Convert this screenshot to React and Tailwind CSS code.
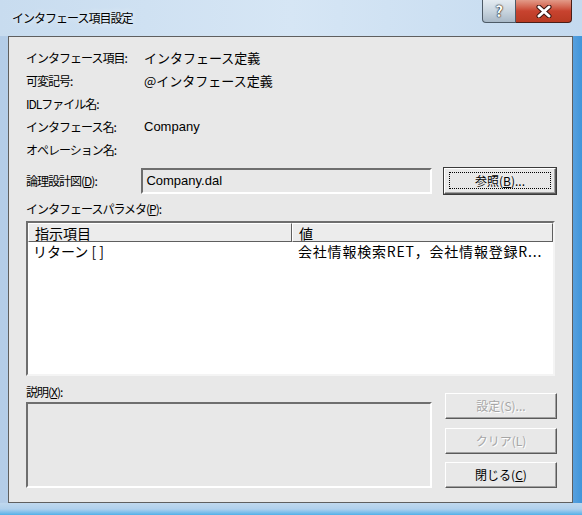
import React from 'react';

const ui = { fontFamily: '"Noto Sans CJK JP", "Liberation Sans", sans-serif' };

// classic raised push button
const Btn = ({ children, disabled, className = '' }) => (
  <div
    className={`h-[26px] w-[112px] flex items-center justify-center bg-[#e8e8e8] border border-t-white border-l-white border-b-[#5a5a5a] border-r-[#5a5a5a] shadow-[inset_-1px_-1px_0_#a0a0a0] text-[12px] ${
      disabled ? 'text-[#a6a6a6] [text-shadow:1px_1px_0_#ffffff]' : 'text-black'
    } ${className}`}
  >
    {children}
  </div>
);

const InfoRow = ({ label, value }) => (
  <div className="h-[23px] flex items-center">
    <div className="w-[118px] text-[12px] tracking-[-1px]">{label}</div>
    <div className="text-[13px]">{value}</div>
  </div>
);

const App = () => {
  return (
    <div
      className="w-[582px] h-[515px] flex flex-col bg-gradient-to-r from-[#b4cde8] via-[#c4dbf0] via-90% to-[#3f95da] overflow-hidden"
      style={ui}
    >
      {/* title bar */}
      <div className="h-[36px] flex items-start shrink-0 bg-gradient-to-r from-[#c8dcef] via-[#d6e6f5] to-[#c4daef]">
        <div className="pl-[12px] pt-[9px] text-[12px] tracking-[-1px] text-black [text-shadow:0_0_6px_#ffffff]">
          インタフェース項目設定
        </div>
        <div className="ml-auto mr-[10px] flex">
          <div className="w-[34px] h-[23px] flex items-center justify-center rounded-bl-[4px] border border-t-0 border-[#4d5a66] bg-gradient-to-b from-[#e4ebf1] via-[#c9d5df] to-[#a9b9c7] text-white font-bold text-[15px] [text-shadow:0_0_2px_#000,0_0_1px_#000]">
            ?
          </div>
          <div className="w-[56px] h-[23px] flex items-center justify-center rounded-br-[4px] border border-t-0 border-l-0 border-[#4a1e18] bg-gradient-to-b from-[#e29a88] via-[#c8432f] to-[#b83a22]">
            <svg width="16" height="13" viewBox="0 0 16 13">
              <path d="M3 2 L13 11 M13 2 L3 11" stroke="#3a1410" strokeWidth="5" strokeLinecap="round" />
              <path d="M3 2 L13 11 M13 2 L3 11" stroke="#ffffff" strokeWidth="3" strokeLinecap="round" />
            </svg>
          </div>
        </div>
      </div>

      {/* client area */}
      <div className="ml-[8px] mr-[9px] h-[467px] shrink-0 border border-[#5f5f5f] bg-[#e8e8e8] text-black">
        <div className="pl-[17px] pr-[15px] pt-[9px]">
          <InfoRow label="インタフェース項目:" value="インタフェース定義" />
          <InfoRow label="可変記号:" value="@インタフェース定義" />
          <InfoRow label="IDLファイル名:" value="" />
          <InfoRow label="インタフェース名:" value={<span style={{ fontFamily: '"Liberation Sans", sans-serif' }}>Company</span>} />
          <InfoRow label="オペレーション名:" value="" />

          <div className="mt-[6px] h-[27px] flex items-center">
            <div className="w-[116px] text-[12px] tracking-[-1px]">
              論理設計図(<span className="underline">D</span>):
            </div>
            <div className="w-[292px] h-[26px] flex items-center pl-[3px] border-2 border-t-[#6e6e6e] border-l-[#6e6e6e] border-b-white border-r-white bg-[#e8e8e8] text-[13px]" style={{ fontFamily: '"Liberation Sans", sans-serif' }}>
              Company.dal
            </div>
            <div className="ml-[11px] border border-[#3a3a3a]">
              <Btn className="w-[110px] h-[25px]">
                <div className="w-[102px] h-[17px] border border-dotted border-black flex items-center justify-center">
                  参照(<span className="underline">B</span>)...
                </div>
              </Btn>
            </div>
          </div>

          <div className="mt-[7px] h-[16px] flex items-center text-[12px] tracking-[-1px]">
            インタフェースパラメタ(<span className="underline">P</span>):
          </div>

          {/* parameter list */}
          <div className="mt-[4px] w-[529px] h-[155px] border-2 border-t-[#6e6e6e] border-l-[#6e6e6e] border-b-[#f4f4f4] border-r-[#f4f4f4] bg-white flex flex-col">
            <div className="h-[19px] flex bg-[#ececec] text-[14px] leading-none">
              <div className="w-[264px] flex items-center pl-[6px] border border-t-white border-l-white border-b-[#5f5f5f] border-r-[#5f5f5f]">
                指示項目
              </div>
              <div className="flex-1 flex items-center pl-[6px] border border-t-white border-l-white border-b-[#5f5f5f] border-r-[#5f5f5f]">
                値
              </div>
            </div>
            <div className="h-[18px] flex items-center text-[14px] leading-none">
              <div className="w-[270px] pl-[5px]">リターン [ ]</div>
              <div className="tracking-[0.8px]">会社情報検索RET，会社情報登録R...</div>
            </div>
          </div>

          {/* description + buttons */}
          <div className="flex">
            <div className="w-[406px]">
              <div className="mt-[8px] h-[16px] flex items-center text-[12px] tracking-[-1px]">
                説明(<span className="underline">X</span>):
              </div>
              <div className="mt-[2px] h-[86px] border-2 border-t-[#6e6e6e] border-l-[#6e6e6e] border-b-white border-r-white bg-[#e8e8e8]" />
            </div>
            <div className="ml-[13px] pt-[17px] flex flex-col">
              <Btn disabled>設定(S)...</Btn>
              <Btn disabled className="mt-[9px]">クリア(L)</Btn>
              <Btn className="mt-[8px]">
                閉じる(<span className="underline">C</span>)
              </Btn>
            </div>
          </div>
        </div>
      </div>

      {/* bottom frame */}
      <div className="flex-1 bg-gradient-to-b from-[#c0d8ee] via-[#b0d0ec] to-[#4fb0e8]" />
    </div>
  );
};

export default App;
